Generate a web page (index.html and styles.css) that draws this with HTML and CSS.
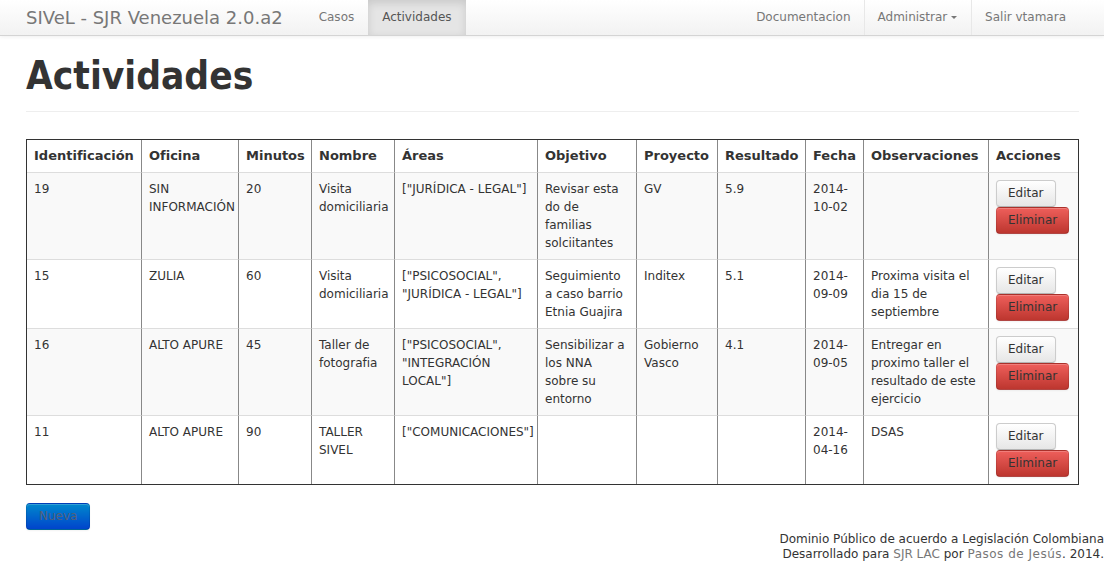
FILE: index.html
```html
<!DOCTYPE html>
<html lang="es">
<head>
<meta charset="utf-8">
<title>Actividades</title>
<link rel="stylesheet" href="styles.css">
</head>
<body>
<header class="navbar">
  <div class="nav-left">
    <a class="brand" href="#">SIVeL - SJR Venezuela 2.0.a2</a>
    <ul class="nav">
      <li><a href="#">Casos</a></li>
      <li class="active"><a href="#">Actividades</a></li>
    </ul>
  </div>
  <ul class="nav nav-right">
    <li><a href="#">Documentacion</a></li>
    <li><a href="#">Administrar <b class="caret"></b></a></li>
    <li><a href="#">Salir vtamara</a></li>
  </ul>
</header>

<main class="container">
  <div class="page-header">
    <h1>Actividades</h1>
  </div>

  <table class="table">
    <thead>
      <tr>
        <th>Identificación</th>
        <th>Oficina</th>
        <th>Minutos</th>
        <th>Nombre</th>
        <th>Áreas</th>
        <th>Objetivo</th>
        <th>Proyecto</th>
        <th>Resultado</th>
        <th>Fecha</th>
        <th>Observaciones</th>
        <th>Acciones</th>
      </tr>
    </thead>
    <tbody>
      <tr>
        <td>19</td>
        <td>SIN INFORMACIÓN</td>
        <td>20</td>
        <td>Visita domiciliaria</td>
        <td>["JURÍDICA - LEGAL"]</td>
        <td>Revisar esta do de familias solciitantes</td>
        <td>GV</td>
        <td>5.9</td>
        <td>2014-10-02</td>
        <td></td>
        <td><div class="actions"><a class="btn" href="#">Editar</a><a class="btn btn-danger" href="#">Eliminar</a></div></td>
      </tr>
      <tr>
        <td>15</td>
        <td>ZULIA</td>
        <td>60</td>
        <td>Visita domiciliaria</td>
        <td>["PSICOSOCIAL", "JURÍDICA - LEGAL"]</td>
        <td>Seguimiento a caso barrio Etnia Guajira</td>
        <td>Inditex</td>
        <td>5.1</td>
        <td>2014-09-09</td>
        <td>Proxima visita el dia 15 de septiembre</td>
        <td><div class="actions"><a class="btn" href="#">Editar</a><a class="btn btn-danger" href="#">Eliminar</a></div></td>
      </tr>
      <tr>
        <td>16</td>
        <td>ALTO APURE</td>
        <td>45</td>
        <td>Taller de fotografia</td>
        <td>["PSICOSOCIAL", "INTEGRACIÓN LOCAL"]</td>
        <td>Sensibilizar a los NNA sobre su entorno</td>
        <td>Gobierno Vasco</td>
        <td>4.1</td>
        <td>2014-09-05</td>
        <td>Entregar en proximo taller el resultado de este ejercicio</td>
        <td><div class="actions"><a class="btn" href="#">Editar</a><a class="btn btn-danger" href="#">Eliminar</a></div></td>
      </tr>
      <tr>
        <td>11</td>
        <td>ALTO APURE</td>
        <td>90</td>
        <td>TALLER SIVEL</td>
        <td>["COMUNICACIONES"]</td>
        <td></td>
        <td></td>
        <td></td>
        <td>2014-04-16</td>
        <td>DSAS</td>
        <td><div class="actions"><a class="btn" href="#">Editar</a><a class="btn btn-danger" href="#">Eliminar</a></div></td>
      </tr>
    </tbody>
  </table>

  <div class="form-actions">
    <a class="btn btn-primary" href="#">Nueva</a>
  </div>
</main>

<footer class="footer">
  <p>Dominio Público de acuerdo a Legislación Colombiana<br>
  Desarrollado para <a href="#">SJR LAC</a> por <a class="author" href="#">Pasos de Jesús</a>. 2014.</p>
</footer>
</body>
</html>
```

FILE: styles.css
```css
* {
  box-sizing: border-box;
}

body {
  margin: 0;
  font-family: "DejaVu Sans", sans-serif;
  font-size: 12px;
  line-height: 18px;
  color: #333;
  background: #fff;
}

/* Navbar */
.navbar {
  height: 36px;
  display: flex;
  justify-content: space-between;
  padding: 0 24px 0 26px;
  background: linear-gradient(#ffffff, #f2f2f2);
  border-bottom: 1px solid #d4d4d4;
  box-shadow: 0 1px 4px rgba(0, 0, 0, 0.065);
}

.nav-left {
  display: flex;
}

.brand {
  font-size: 18px;
  line-height: 35px;
  color: #777;
  text-decoration: none;
  margin-right: 22px;
}

.nav {
  display: flex;
  list-style: none;
  margin: 0;
  padding: 0;
}

.nav a {
  display: block;
  padding: 0 14px;
  line-height: 35px;
  color: #777;
  text-decoration: none;
}

.nav .active a {
  background: #e5e5e5;
  color: #555;
  box-shadow: inset 0 3px 8px rgba(0, 0, 0, 0.125);
}

.nav-right li:first-child a {
  padding-right: 13px;
}

.nav-right li + li {
  border-left: 1px solid #e8e8e8;
}

.nav-right li + li a {
  padding-left: 13px;
}

.caret {
  display: inline-block;
  width: 0;
  height: 0;
  vertical-align: middle;
  border-top: 3px solid #777;
  border-left: 3px solid transparent;
  border-right: 3px solid transparent;
}

/* Content */
.container {
  padding: 20px 25px 0 26px;
}

.page-header {
  padding-bottom: 15px;
  border-bottom: 1px solid #eee;
}

h1 {
  margin: 0;
  font-family: "DejaVu Sans Condensed", "DejaVu Sans", sans-serif;
  font-stretch: condensed;
  font-size: 38.5px;
  line-height: 40px;
  font-weight: bold;
  color: #333;
}

.table {
  width: 1053px;
  margin-top: 27px;
  table-layout: fixed;
  border-collapse: separate;
  border-spacing: 0;
  border: 1px solid #333;
}

.table th,
.table td {
  padding: 7px 8px 7px 7px;
  text-align: left;
  vertical-align: top;
  border-left: 1px solid #888;
  border-top: 1px solid #ddd;
}

.table th:first-child,
.table td:first-child {
  border-left: 0;
}

.table thead th {
  border-top: 0;
  font-size: 13px;
  font-weight: bold;
}

.table th:nth-child(1) { width: 114px; }
.table th:nth-child(2) { width: 97px; }
.table th:nth-child(3) { width: 73px; }
.table th:nth-child(4) { width: 83px; }
.table th:nth-child(5) { width: 143px; }
.table th:nth-child(6) { width: 99px; }
.table th:nth-child(7) { width: 81px; }
.table th:nth-child(8) { width: 88px; }
.table th:nth-child(9) { width: 58px; }
.table th:nth-child(10) { width: 125px; }
.table th:nth-child(11) { width: 90px; }

.table tbody tr:nth-child(odd) td {
  background: #f9f9f9;
}

.actions {
  display: flex;
  flex-direction: column;
  align-items: flex-start;
}

/* Buttons */
.btn {
  display: inline-block;
  padding: 4px 11px;
  font-size: 12px;
  line-height: 17px;
  color: #333;
  text-decoration: none;
  background: linear-gradient(#ffffff, #e6e6e6);
  border: 1px solid #cccccc;
  border-bottom-color: #b3b3b3;
  border-radius: 4px;
  box-shadow: inset 0 1px 0 rgba(255, 255, 255, 0.2), 0 1px 2px rgba(0, 0, 0, 0.05);
}

.btn-danger {
  background: linear-gradient(#ee5f5b, #bd362f);
  border-color: rgba(0, 0, 0, 0.1) rgba(0, 0, 0, 0.1) rgba(0, 0, 0, 0.25);
}

.btn-primary {
  padding: 4px 12px;
  color: #55617a;
  background: linear-gradient(#0088cc, #0044cc);
  border-color: rgba(0, 0, 0, 0.1) rgba(0, 0, 0, 0.1) rgba(0, 0, 0, 0.25);
}

.form-actions {
  display: flex;
  margin-top: 18px;
}

/* Footer */
.footer {
  text-align: right;
  margin-top: 2px;
}

.footer p {
  margin: 0;
  line-height: 15px;
}

.footer a {
  color: #777;
  text-decoration: none;
}

.footer .author {
  letter-spacing: 0.5px;
}
```
